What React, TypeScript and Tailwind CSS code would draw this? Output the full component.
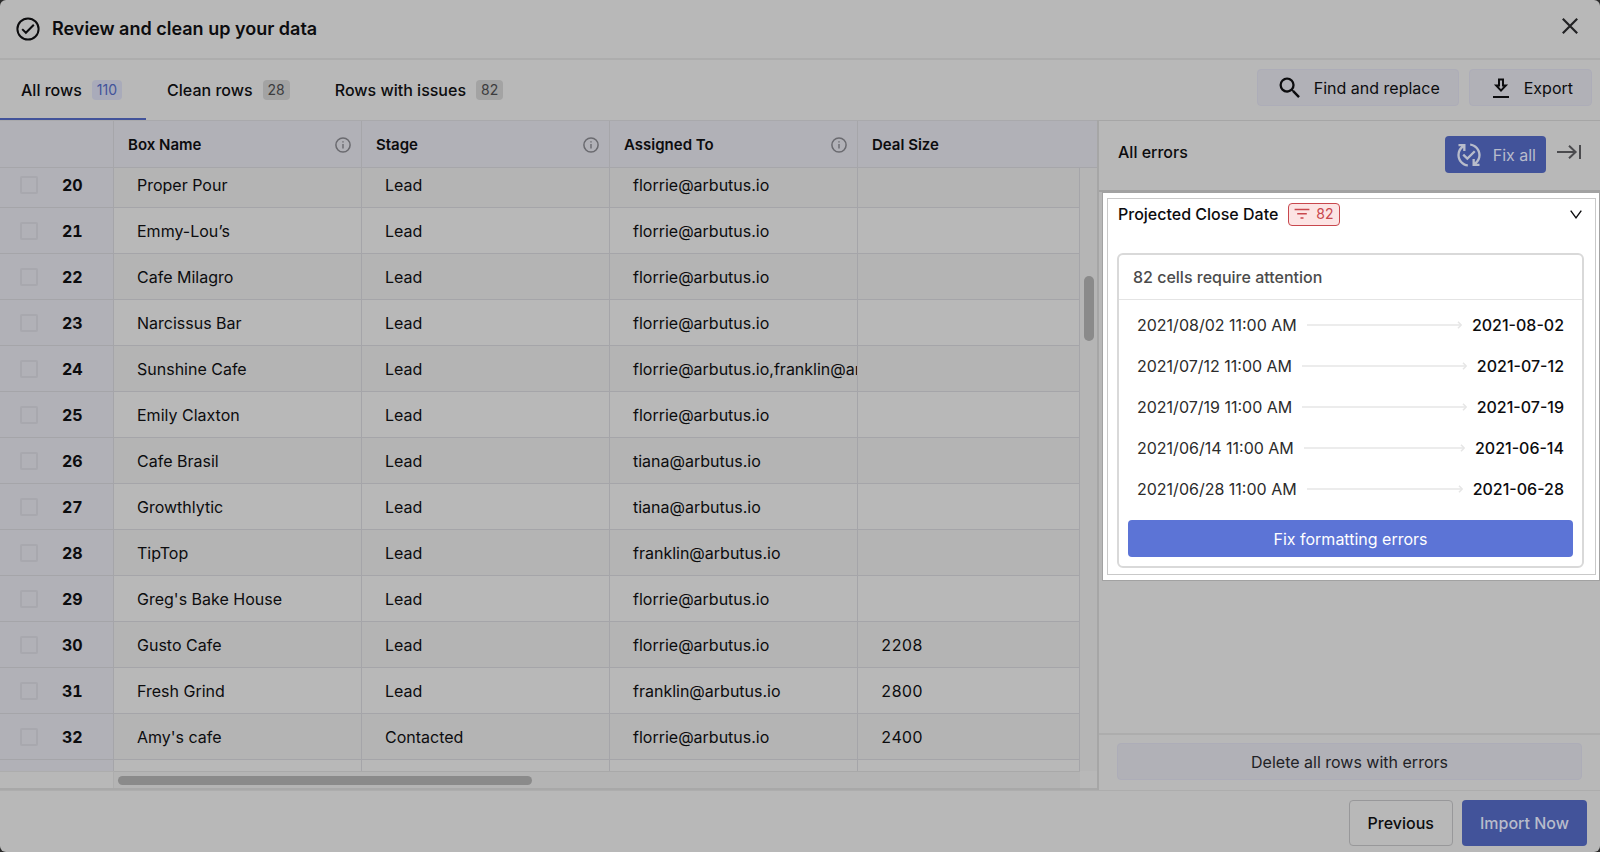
import React, { useLayoutEffect, useRef } from 'react';
import { MdOutlinePublishedWithChanges, MdSearch } from 'react-icons/md';

interface BoxRow {
  id: number;
  name: string;
  stage: string;
  assignedTo: string;
  dealSize?: string;
}

const ROWS: BoxRow[] = [
  { id: 20, name: 'Proper Pour', stage: 'Lead', assignedTo: 'florrie@arbutus.io' },
  { id: 21, name: 'Emmy-Lou’s', stage: 'Lead', assignedTo: 'florrie@arbutus.io' },
  { id: 22, name: 'Cafe Milagro', stage: 'Lead', assignedTo: 'florrie@arbutus.io' },
  { id: 23, name: 'Narcissus Bar', stage: 'Lead', assignedTo: 'florrie@arbutus.io' },
  { id: 24, name: 'Sunshine Cafe', stage: 'Lead', assignedTo: 'florrie@arbutus.io,franklin@arbutus.io' },
  { id: 25, name: 'Emily Claxton', stage: 'Lead', assignedTo: 'florrie@arbutus.io' },
  { id: 26, name: 'Cafe Brasil', stage: 'Lead', assignedTo: 'tiana@arbutus.io' },
  { id: 27, name: 'Growthlytic', stage: 'Lead', assignedTo: 'tiana@arbutus.io' },
  { id: 28, name: 'TipTop', stage: 'Lead', assignedTo: 'franklin@arbutus.io' },
  { id: 29, name: "Greg's Bake House", stage: 'Lead', assignedTo: 'florrie@arbutus.io' },
  { id: 30, name: 'Gusto Cafe', stage: 'Lead', assignedTo: 'florrie@arbutus.io', dealSize: '2208' },
  { id: 31, name: 'Fresh Grind', stage: 'Lead', assignedTo: 'franklin@arbutus.io', dealSize: '2800' },
  { id: 32, name: "Amy's cafe", stage: 'Contacted', assignedTo: 'florrie@arbutus.io', dealSize: '2400' },
];

const COLUMNS = [
  { label: 'Box Name', info: true },
  { label: 'Stage', info: true },
  { label: 'Assigned To', info: true },
  { label: 'Deal Size', info: false },
];

const TABS = [
  { label: 'All rows', count: 110, active: true },
  { label: 'Clean rows', count: 28, active: false },
  { label: 'Rows with issues', count: 82, active: false },
];

const FIXES = [
  { from: '2021/08/02 11:00 AM', to: '2021-08-02' },
  { from: '2021/07/12 11:00 AM', to: '2021-07-12' },
  { from: '2021/07/19 11:00 AM', to: '2021-07-19' },
  { from: '2021/06/14 11:00 AM', to: '2021-06-14' },
  { from: '2021/06/28 11:00 AM', to: '2021-06-28' },
];

const CheckCircleIcon: React.FC = () => (
  <svg width="24" height="24" viewBox="0 0 24 24" fill="none" stroke="currentColor" strokeWidth="2">
    <circle cx="12" cy="12" r="10.6" />
    <path d="M6.2 12.1l3.7 3.7 7.9-8" />
  </svg>
);

const CloseIcon: React.FC = () => (
  <svg width="16" height="16" viewBox="0 0 16 16" fill="none" stroke="currentColor" strokeWidth="2.2">
    <path d="M.8.8l14.4 14.4M15.2.8L.8 15.2" />
  </svg>
);

const DownloadIcon: React.FC = () => (
  <svg width="18" height="20" viewBox="0 0 18 20" fill="none" stroke="currentColor" strokeWidth="2">
    <path d="M7 1.5h4v6h2.8L9 12.6 4.2 7.5H7zM1 19h16" />
  </svg>
);

const InfoIcon: React.FC = () => (
  <svg className="text-[#6a6a6f]" width="16" height="16" viewBox="0 0 16 16" fill="none" stroke="currentColor">
    <circle cx="8" cy="8" r="7.1" strokeWidth="1.5" />
    <path d="M8 7v4.6M8 4.2v1.4" strokeWidth="1.4" />
  </svg>
);

const CollapseIcon: React.FC = () => (
  <svg width="26" height="16" viewBox="0 0 26 16" fill="none" stroke="currentColor" strokeWidth="2">
    <path d="M1 8h18.5M13 1.8L19.6 8 13 14.2M24 1v14" />
  </svg>
);

const FilterIcon: React.FC = () => (
  <svg width="16" height="12" viewBox="0 0 16 12" fill="none" stroke="currentColor" strokeWidth="1.6">
    <path d="M.6 1.5h14.8M3.2 5.7h9.6M6.5 10h3" />
  </svg>
);

const ChevronIcon: React.FC = () => (
  <svg width="12" height="9" viewBox="0 0 12 9" fill="none" stroke="currentColor" strokeWidth="1.4">
    <path d="M.7.7L6 7.8 11.3.7" />
  </svg>
);

const Header: React.FC = () => (
  <header className="flex h-[60px] shrink-0 items-center justify-between border-b-2 border-[#adadad] pl-4 pr-[22px]">
    <div className="flex items-center gap-3">
      <CheckCircleIcon />
      <h1 className="text-lg leading-6 font-semibold">Review and clean up your data</h1>
    </div>
    <button aria-label="Close" className="mb-1.5 text-[#222224]">
      <CloseIcon />
    </button>
  </header>
);

const Toolbar: React.FC = () => (
  <div className="flex h-[60px] shrink-0 justify-between">
    <nav className="flex">
      {TABS.map(tab => (
        <button
          key={tab.label}
          className={`flex items-center gap-2.5 border-b-2 pt-0.5 pl-[21px] pr-6 text-base font-medium ${tab.active ? 'border-[#42539a]' : 'border-transparent'}`}
        >
          {tab.label}
          <span className={`rounded px-[5px] text-sm leading-5 font-normal ${tab.active ? 'bg-[#a9abba] text-[#42539a]' : 'bg-[#a3a3a3] text-[#3c3c3e]'}`}>
            {tab.count}
          </span>
        </button>
      ))}
    </nav>
    <div className="flex items-center gap-2.5 pr-2 pb-2 pt-[3px]">
      <button className="flex h-[37px] items-center gap-2.5 rounded border border-[#adadb8] bg-[#b1b1b7] px-[18px] text-base">
        <MdSearch size={28} />
        Find and replace
      </button>
      <button className="flex h-[37px] items-center gap-3.5 rounded border border-[#adadb8] bg-[#b1b1b7] pl-[22px] pr-[18px] text-base">
        <DownloadIcon />
        Export
      </button>
    </div>
  </div>
);

const DataTable: React.FC = () => {
  const scroller = useRef<HTMLDivElement>(null);

  useLayoutEffect(() => {
    if (scroller.current) scroller.current.scrollTop = 6;
  }, []);

  return (
    <section className="relative flex min-w-0 flex-1 flex-col border-t border-[#a9a9ac]">
      <div ref={scroller} className="min-h-0 flex-1 overflow-hidden">
        <table className="w-full table-fixed border-separate border-spacing-0">
          <colgroup>
            <col className="w-[114px]" />
            <col className="w-[248px]" />
            <col className="w-[248px]" />
            <col className="w-[248px]" />
            <col />
            <col className="w-[17px]" />
          </colgroup>
          <thead>
            <tr className="text-left text-[15px]">
              <th className="sticky top-0 h-[47px] border-r border-b border-[#a6a6aa] bg-[#b1b1b7]" aria-label="Row" />
              {COLUMNS.map(col => (
                <th
                  key={col.label}
                  className={`sticky top-0 h-[47px] border-b border-[#a6a6aa] bg-[#b1b1b7] pt-0.5 pl-3.5 pr-2.5 font-semibold ${col.info ? 'border-r' : ''}`}
                >
                  <div className="flex items-center justify-between">
                    {col.label}
                    {col.info && <InfoIcon />}
                  </div>
                </th>
              ))}
              <th className="sticky top-0 border-b border-[#a6a6aa] bg-[#b1b1b7]" aria-hidden="true" />
            </tr>
          </thead>
          <tbody className="text-base">
            {ROWS.map(row => (
              <tr key={row.id} className="odd:bg-[#b4b4b4]">
                <td className="h-[46px] border-r border-b border-[#a5a5a9] bg-[#b1b1b7] pl-5">
                  <div className="flex items-center gap-6">
                    <input
                      type="checkbox"
                      aria-label={`Select row ${row.id}`}
                      className="size-[18px] appearance-none rounded-xs border-2 border-[#a8a8ae]"
                    />
                    <span className="font-bold tabular-nums">{row.id}</span>
                  </div>
                </td>
                <td className="truncate border-r border-b border-[#a5a5a9] pl-[23px]">{row.name}</td>
                <td className="truncate border-r border-b border-[#a5a5a9] pl-[23px]">{row.stage}</td>
                <td className="overflow-hidden border-r border-b border-[#a5a5a9] pl-[23px] whitespace-nowrap">{row.assignedTo}</td>
                <td className="border-r border-b border-[#a5a5a9] pl-[23px] tabular-nums">{row.dealSize}</td>
                <td className="bg-[#b5b5b5]" />
              </tr>
            ))}
            <tr>
              <td className="h-[46px] border-r border-[#a5a5a9] bg-[#b1b1b7]" />
              <td className="border-r border-[#a5a5a9]" />
              <td className="border-r border-[#a5a5a9]" />
              <td className="border-r border-[#a5a5a9]" />
              <td className="border-r border-[#a5a5a9]" />
              <td className="bg-[#b5b5b5]" />
            </tr>
          </tbody>
        </table>
      </div>
      {/* scrollbars */}
      <div className="absolute top-[155px] right-[3px] h-[65px] w-2.5 rounded-full bg-[#8a8a8a]" />
      <div className="flex h-[19px] shrink-0 border-b-2 border-[#a8a8a8]">
        <div className="w-[114px] border-t border-r border-[#adadad]" />
        <div className="flex-1 border-t border-[#a9a9a9] bg-[#b4b4b4] pt-1 pl-1">
          <div className="h-[9px] w-[43%] rounded-full bg-[#8a8a8a]" />
        </div>
        <div className="w-[17px]" />
      </div>
    </section>
  );
};

const ErrorCard: React.FC = () => (
  <div className="ml-[3px] border border-[#a2a2a2] bg-white py-[5px] pr-[3px] pl-1">
    <div className="border border-[#c9c9c9] px-[9px] pt-0.5 pb-1.5">
      <div className="flex h-[26px] items-center justify-between pr-1 pl-px">
        <div className="flex items-center gap-2.5">
          <h3 className="text-base font-medium">Projected Close Date</h3>
          <span className="flex h-[23px] items-center gap-1.5 rounded border border-[#c8474d] bg-[#fce4e4] px-[5px] text-sm text-[#c8474d]">
            <FilterIcon />
            82
          </span>
        </div>
        <button aria-label="Collapse group">
          <ChevronIcon />
        </button>
      </div>
      <div className="mt-[26px] mr-0.5 rounded-md border-2 border-[#d9d9d9] pb-[9px]">
        <p className="flex h-[45px] items-center border-b border-[#e4e4e4] pl-3.5 text-base font-medium text-[#4b4b4b]">
          82 cells require attention
        </p>
        <ul className="px-[18px] pt-1 pb-[11px]">
          {FIXES.map(fix => (
            <li key={fix.from} className="flex h-[41px] items-center gap-2.5 text-base">
              <span className="text-[#2c2c2c]">{fix.from}</span>
              <span className="flex flex-1 items-center text-[#e6e6e6]">
                <span className="h-0.5 flex-1 bg-[#ececec]" />
                <svg className="-ml-1" width="5" height="8" viewBox="0 0 5 8" fill="none" stroke="currentColor" strokeWidth="1.5">
                  <path d="M1 .7L4.2 4 1 7.3" />
                </svg>
              </span>
              <span className="font-medium">{fix.to}</span>
            </li>
          ))}
        </ul>
        <div className="px-[9px]">
          <button className="h-[37px] w-full rounded bg-[#5c74d6] text-base text-white">Fix formatting errors</button>
        </div>
      </div>
    </div>
  </div>
);

const ErrorPanel: React.FC = () => (
  <aside className="flex w-[503px] shrink-0 flex-col border-t border-l-2 border-[#a6a6a6]">
    <div className="flex h-[71px] shrink-0 items-center justify-between border-b-2 border-[#a2a2a2] pr-[18px] pb-0.5 pl-[19px]">
      <h2 className="mb-1.5 text-base font-medium">All errors</h2>
      <div className="flex items-center gap-2.5">
        <button className="flex h-[37px] items-center gap-2.5 rounded bg-[#42539a] px-2.5 text-base text-[#b8bccb]">
          <MdOutlinePublishedWithChanges size={28} />
          Fix all
        </button>
        <button aria-label="Hide panel" className="mb-1.5 text-[#4b4b4e]">
          <CollapseIcon />
        </button>
      </div>
    </div>
    <ErrorCard />
    <div className="flex-1" />
    <div className="border-t-2 border-[#adadad] px-[18px] pt-2 pb-2.5">
      <button className="h-[37px] w-full rounded border border-[#adadb8] bg-[#b1b1b7] text-base text-[#222226]">
        Delete all rows with errors
      </button>
    </div>
  </aside>
);

const Footer: React.FC = () => (
  <footer className="flex h-[62px] shrink-0 items-center justify-end gap-[9px] border-t border-[#adadad] pt-0.5 pr-[13px]">
    <button className="h-[46px] rounded border border-[#98989a] px-[18px] text-base font-medium">Previous</button>
    <button className="h-[46px] rounded bg-[#42539a] px-[18px] text-base font-medium text-[#b8bccb]">Import Now</button>
  </footer>
);

export default function App() {
  return (
    <div className="h-screen bg-[#2b2b2b] font-['Inter',sans-serif]">
      <main className="flex h-full flex-col overflow-hidden rounded-md bg-[#b8b8b8] text-[#0c0c0e]">
        <Header />
        <Toolbar />
        <div className="flex min-h-0 flex-1">
          <DataTable />
          <ErrorPanel />
        </div>
        <Footer />
      </main>
    </div>
  );
}
